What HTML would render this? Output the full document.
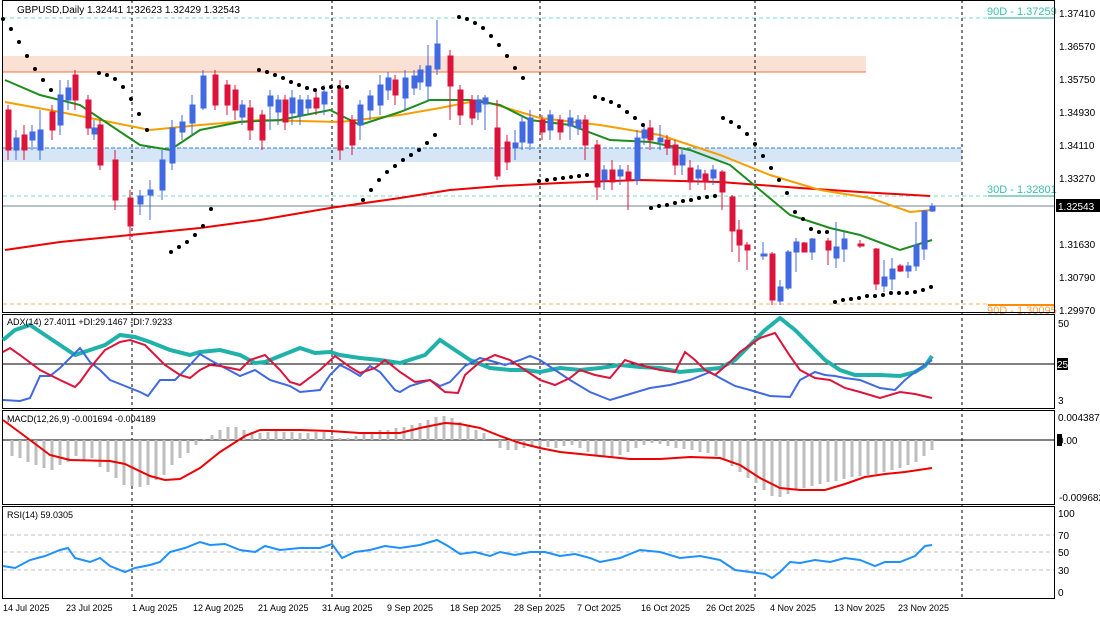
<!DOCTYPE html>
<html><head><meta charset="utf-8"><style>
html,body{margin:0;padding:0;background:#fff;}
svg{display:block;font-family:"Liberation Sans",sans-serif;}
</style></head><body>
<svg width="1100" height="619" viewBox="0 0 1100 619" xmlns="http://www.w3.org/2000/svg">
<rect width="1100" height="619" fill="#fff"/>
<rect x="3" y="56" width="863" height="16" fill="#fbe0d4"/>
<line x1="3" y1="72" x2="866" y2="72" stroke="#e8743b" stroke-width="1"/>
<rect x="3" y="148" width="959" height="14" fill="#d6e6f7"/>
<line x1="3" y1="148" x2="962" y2="148" stroke="#2f80d0" stroke-width="1" stroke-dasharray="4,2"/>
<line x1="3" y1="18" x2="988" y2="18" stroke="#7dd8c8" stroke-dasharray="4,3"/>
<line x1="988" y1="18" x2="1054" y2="18" stroke="#1fa889"/>
<line x1="3" y1="196" x2="988" y2="196" stroke="#7dd8c8" stroke-dasharray="4,3"/>
<line x1="988" y1="196" x2="1054" y2="196" stroke="#1fa889"/>
<line x1="3" y1="304" x2="988" y2="304" stroke="#ffb060" stroke-dasharray="4,3"/>
<line x1="988" y1="305" x2="1054" y2="305" stroke="#ff8c00" stroke-width="2"/>
<line x1="3" y1="206" x2="1054" y2="206" stroke="#708090"/>
<text x="987" y="15" font-size="11" fill="#3cbfa8">90D - 1.37259</text>
<text x="987" y="193" font-size="11" fill="#3cbfa8">30D - 1.32801</text>
<text x="987" y="314" font-size="11" fill="#ffa040">90D - 1.30095</text>
<g stroke="#000" stroke-dasharray="3,3" stroke-width="1">
<line x1="132" y1="0" x2="132" y2="600"/><line x1="332" y1="0" x2="332" y2="600"/>
<line x1="540" y1="0" x2="540" y2="600"/><line x1="755" y1="0" x2="755" y2="600"/>
<line x1="962" y1="0" x2="962" y2="600"/>
</g>
<polyline fill="none" stroke="#e00" stroke-width="2" points="5,250 60,242 130,235 200,228 260,220 330,208 400,198 450,190 500,186 560,183 640,180 720,182 760,185 800,188 860,192 930,196"/>
<polyline fill="none" stroke="#f5a000" stroke-width="2" points="5,102 60,112 100,120 150,130 200,125 260,120 340,122 400,115 440,108 480,100 540,118 600,125 660,135 720,155 770,175 820,190 870,198 910,212 932,210"/>
<polyline fill="none" stroke="#1e8c1e" stroke-width="2" points="5,80 40,95 80,105 110,125 140,145 170,150 200,130 240,122 280,120 330,110 360,125 400,112 430,100 470,100 500,105 530,120 570,125 610,140 650,142 690,150 730,165 760,190 790,215 830,228 860,235 900,250 932,240"/>
<g stroke-width="1">
<g fill="#dc143c" stroke="#dc143c">
<line x1="8" y1="105" x2="8" y2="160"/><rect x="6" y="110" width="5" height="40"/>
<line x1="24" y1="125" x2="24" y2="160"/><rect x="22" y="135" width="5" height="15"/>
<line x1="52" y1="105" x2="52" y2="140"/><rect x="50" y="112" width="5" height="18"/>
<line x1="75" y1="70" x2="75" y2="110"/><rect x="73" y="75" width="5" height="25"/>
<line x1="88" y1="95" x2="88" y2="135"/><rect x="86" y="100" width="5" height="28"/>
<line x1="100" y1="120" x2="100" y2="170"/><rect x="98" y="125" width="5" height="40"/>
<line x1="115" y1="150" x2="115" y2="210"/><rect x="113" y="160" width="5" height="40"/>
<line x1="130" y1="190" x2="130" y2="240"/><rect x="128" y="198" width="5" height="28"/>
<line x1="215" y1="70" x2="215" y2="110"/><rect x="213" y="75" width="5" height="30"/>
<line x1="227" y1="80" x2="227" y2="115"/><rect x="225" y="85" width="5" height="20"/>
<line x1="235" y1="85" x2="235" y2="120"/><rect x="233" y="90" width="5" height="20"/>
<line x1="250" y1="100" x2="250" y2="140"/><rect x="248" y="108" width="5" height="22"/>
<line x1="262" y1="110" x2="262" y2="150"/><rect x="260" y="115" width="5" height="25"/>
<line x1="285" y1="95" x2="285" y2="130"/><rect x="283" y="100" width="5" height="22"/>
<line x1="316" y1="90" x2="316" y2="115"/><rect x="314" y="98" width="5" height="10"/>
<line x1="340" y1="80" x2="340" y2="160"/><rect x="338" y="88" width="5" height="62"/>
<line x1="352" y1="115" x2="352" y2="155"/><rect x="350" y="120" width="5" height="25"/>
<line x1="395" y1="75" x2="395" y2="105"/><rect x="393" y="80" width="5" height="15"/>
<line x1="450" y1="50" x2="450" y2="120"/><rect x="448" y="56" width="5" height="30"/>
<line x1="460" y1="85" x2="460" y2="125"/><rect x="458" y="90" width="5" height="25"/>
<line x1="472" y1="95" x2="472" y2="125"/><rect x="470" y="100" width="5" height="18"/>
<line x1="497" y1="100" x2="497" y2="180"/><rect x="495" y="128" width="5" height="48"/>
<line x1="507" y1="135" x2="507" y2="170"/><rect x="505" y="142" width="5" height="20"/>
<line x1="542" y1="115" x2="542" y2="140"/><rect x="540" y="120" width="5" height="12"/>
<line x1="560" y1="115" x2="560" y2="140"/><rect x="558" y="120" width="5" height="12"/>
<line x1="585" y1="115" x2="585" y2="160"/><rect x="583" y="120" width="5" height="25"/>
<line x1="597" y1="140" x2="597" y2="200"/><rect x="595" y="145" width="5" height="42"/>
<line x1="612" y1="160" x2="612" y2="190"/><rect x="610" y="170" width="5" height="12"/>
<line x1="628" y1="165" x2="628" y2="210"/><rect x="626" y="172" width="5" height="8"/>
<line x1="650" y1="120" x2="650" y2="150"/><rect x="648" y="128" width="5" height="12"/>
<line x1="667" y1="135" x2="667" y2="155"/><rect x="665" y="140" width="5" height="8"/>
<line x1="675" y1="140" x2="675" y2="175"/><rect x="673" y="145" width="5" height="20"/>
<line x1="690" y1="160" x2="690" y2="190"/><rect x="688" y="168" width="5" height="14"/>
<line x1="705" y1="170" x2="705" y2="190"/><rect x="703" y="174" width="5" height="8"/>
<line x1="722" y1="170" x2="722" y2="210"/><rect x="720" y="172" width="5" height="20"/>
<line x1="732" y1="195" x2="732" y2="252"/><rect x="730" y="197" width="5" height="34"/>
<line x1="739" y1="220" x2="739" y2="262"/><rect x="737" y="230" width="5" height="15"/>
<line x1="747" y1="242" x2="747" y2="270"/><rect x="745" y="245" width="5" height="5"/>
<line x1="772" y1="252" x2="772" y2="305"/><rect x="770" y="254" width="5" height="46"/>
<line x1="804" y1="242" x2="804" y2="252"/><rect x="802" y="243" width="5" height="9"/>
<line x1="828" y1="238" x2="828" y2="265"/><rect x="826" y="241" width="5" height="9"/>
<line x1="860" y1="240" x2="860" y2="248"/><rect x="858" y="244" width="6" height="2"/>
<line x1="876" y1="248" x2="876" y2="290"/><rect x="874" y="249" width="5" height="35"/>
<line x1="900" y1="264" x2="900" y2="272"/><rect x="898" y="266" width="5" height="5"/>
</g>
<g fill="#4169e1" stroke="#4169e1">
<line x1="16" y1="130" x2="16" y2="160"/><rect x="14" y="138" width="5" height="12"/>
<line x1="32" y1="125" x2="32" y2="150"/><rect x="30" y="132" width="5" height="8"/>
<line x1="40" y1="110" x2="40" y2="160"/><rect x="38" y="130" width="5" height="20"/>
<line x1="60" y1="80" x2="60" y2="135"/><rect x="58" y="95" width="5" height="30"/>
<line x1="68" y1="80" x2="68" y2="110"/><rect x="66" y="88" width="5" height="12"/>
<line x1="94" y1="120" x2="94" y2="140"/><rect x="92" y="128" width="5" height="6"/>
<line x1="140" y1="190" x2="140" y2="215"/><rect x="138" y="196" width="5" height="8"/>
<line x1="150" y1="180" x2="150" y2="220"/><rect x="148" y="190" width="5" height="5"/>
<line x1="162" y1="150" x2="162" y2="200"/><rect x="160" y="160" width="5" height="30"/>
<line x1="172" y1="120" x2="172" y2="170"/><rect x="170" y="128" width="5" height="35"/>
<line x1="182" y1="115" x2="182" y2="140"/><rect x="180" y="122" width="5" height="10"/>
<line x1="192" y1="95" x2="192" y2="135"/><rect x="190" y="105" width="5" height="18"/>
<line x1="203" y1="70" x2="203" y2="110"/><rect x="201" y="76" width="5" height="32"/>
<line x1="242" y1="100" x2="242" y2="125"/><rect x="240" y="105" width="5" height="12"/>
<line x1="270" y1="90" x2="270" y2="130"/><rect x="268" y="96" width="5" height="10"/>
<line x1="278" y1="95" x2="278" y2="125"/><rect x="276" y="100" width="5" height="12"/>
<line x1="292" y1="90" x2="292" y2="125"/><rect x="290" y="98" width="5" height="15"/>
<line x1="300" y1="95" x2="300" y2="125"/><rect x="298" y="100" width="5" height="15"/>
<line x1="308" y1="95" x2="308" y2="115"/><rect x="306" y="100" width="5" height="8"/>
<line x1="324" y1="85" x2="324" y2="115"/><rect x="322" y="92" width="5" height="12"/>
<line x1="360" y1="100" x2="360" y2="140"/><rect x="358" y="105" width="5" height="20"/>
<line x1="370" y1="90" x2="370" y2="120"/><rect x="368" y="96" width="5" height="14"/>
<line x1="380" y1="75" x2="380" y2="115"/><rect x="378" y="85" width="5" height="20"/>
<line x1="388" y1="72" x2="388" y2="100"/><rect x="386" y="78" width="5" height="12"/>
<line x1="405" y1="70" x2="405" y2="110"/><rect x="403" y="78" width="5" height="20"/>
<line x1="414" y1="70" x2="414" y2="95"/><rect x="412" y="76" width="5" height="12"/>
<line x1="420" y1="65" x2="420" y2="90"/><rect x="418" y="70" width="5" height="12"/>
<line x1="428" y1="45" x2="428" y2="100"/><rect x="426" y="66" width="5" height="20"/>
<line x1="437" y1="20" x2="437" y2="75"/><rect x="435" y="44" width="5" height="25"/>
<line x1="478" y1="95" x2="478" y2="120"/><rect x="476" y="100" width="5" height="12"/>
<line x1="485" y1="95" x2="485" y2="130"/><rect x="483" y="98" width="5" height="6"/>
<line x1="515" y1="130" x2="515" y2="160"/><rect x="513" y="143" width="5" height="5"/>
<line x1="522" y1="115" x2="522" y2="150"/><rect x="520" y="122" width="5" height="20"/>
<line x1="530" y1="110" x2="530" y2="150"/><rect x="528" y="118" width="5" height="25"/>
<line x1="550" y1="110" x2="550" y2="140"/><rect x="548" y="115" width="5" height="15"/>
<line x1="570" y1="110" x2="570" y2="140"/><rect x="568" y="118" width="5" height="8"/>
<line x1="578" y1="115" x2="578" y2="135"/><rect x="576" y="120" width="5" height="8"/>
<line x1="604" y1="165" x2="604" y2="190"/><rect x="602" y="170" width="5" height="10"/>
<line x1="620" y1="165" x2="620" y2="185"/><rect x="618" y="170" width="5" height="6"/>
<line x1="637" y1="130" x2="637" y2="185"/><rect x="635" y="138" width="5" height="42"/>
<line x1="644" y1="125" x2="644" y2="145"/><rect x="642" y="130" width="5" height="8"/>
<line x1="660" y1="125" x2="660" y2="150"/><rect x="658" y="138" width="5" height="4"/>
<line x1="682" y1="150" x2="682" y2="175"/><rect x="680" y="155" width="5" height="10"/>
<line x1="698" y1="165" x2="698" y2="185"/><rect x="696" y="170" width="5" height="8"/>
<line x1="713" y1="165" x2="713" y2="185"/><rect x="711" y="170" width="5" height="8"/>
<line x1="763" y1="242" x2="763" y2="260"/><rect x="761" y="254" width="6" height="2"/>
<line x1="780" y1="280" x2="780" y2="305"/><rect x="778" y="287" width="5" height="14"/>
<line x1="788" y1="250" x2="788" y2="290"/><rect x="786" y="252" width="5" height="36"/>
<line x1="796" y1="238" x2="796" y2="272"/><rect x="794" y="242" width="5" height="10"/>
<line x1="812" y1="238" x2="812" y2="260"/><rect x="810" y="239" width="5" height="13"/>
<line x1="836" y1="222" x2="836" y2="268"/><rect x="834" y="247" width="5" height="11"/>
<line x1="844" y1="232" x2="844" y2="262"/><rect x="842" y="239" width="5" height="10"/>
<line x1="884" y1="260" x2="884" y2="292"/><rect x="882" y="277" width="5" height="9"/>
<line x1="892" y1="258" x2="892" y2="290"/><rect x="890" y="269" width="5" height="10"/>
<line x1="908" y1="262" x2="908" y2="278"/><rect x="906" y="266" width="5" height="5"/>
<line x1="916" y1="222" x2="916" y2="271"/><rect x="914" y="245" width="5" height="21"/>
<line x1="924" y1="210" x2="924" y2="260"/><rect x="922" y="211" width="5" height="38"/>
<line x1="932" y1="203" x2="932" y2="212"/><rect x="930" y="206" width="5" height="5"/>
</g>
</g>
<g fill="#000">
<circle cx="3" cy="19" r="2"/><circle cx="11" cy="29" r="2"/><circle cx="19" cy="42" r="2"/><circle cx="27" cy="56" r="2"/><circle cx="35" cy="69" r="2"/><circle cx="43" cy="80" r="2"/><circle cx="51" cy="90" r="2"/>
<circle cx="99" cy="73" r="2"/><circle cx="107" cy="75" r="2"/><circle cx="115" cy="79" r="2"/><circle cx="123" cy="87" r="2"/><circle cx="131" cy="99" r="2"/><circle cx="139" cy="114" r="2"/><circle cx="147" cy="130" r="2"/>
<circle cx="171" cy="252" r="2"/><circle cx="179" cy="247" r="2"/><circle cx="187" cy="242" r="2"/><circle cx="195" cy="235" r="2"/><circle cx="203" cy="226" r="2"/><circle cx="211" cy="209" r="2"/>
<circle cx="259" cy="70" r="2"/><circle cx="267" cy="72" r="2"/><circle cx="275" cy="75" r="2"/><circle cx="283" cy="78" r="2"/><circle cx="291" cy="82" r="2"/><circle cx="299" cy="85" r="2"/><circle cx="307" cy="88" r="2"/><circle cx="315" cy="90" r="2"/><circle cx="323" cy="88" r="2"/><circle cx="331" cy="87" r="2"/><circle cx="339" cy="87" r="2"/><circle cx="347" cy="87" r="2"/>
<circle cx="363" cy="200" r="2"/><circle cx="371" cy="190" r="2"/><circle cx="379" cy="180" r="2"/><circle cx="387" cy="172" r="2"/><circle cx="395" cy="166" r="2"/><circle cx="403" cy="160" r="2"/><circle cx="411" cy="155" r="2"/><circle cx="419" cy="150" r="2"/><circle cx="427" cy="143" r="2"/><circle cx="435" cy="135" r="2"/>
<circle cx="459" cy="17" r="2"/><circle cx="467" cy="19" r="2"/><circle cx="475" cy="23" r="2"/><circle cx="483" cy="28" r="2"/><circle cx="491" cy="36" r="2"/><circle cx="499" cy="45" r="2"/><circle cx="507" cy="56" r="2"/><circle cx="515" cy="68" r="2"/><circle cx="523" cy="78" r="2"/>
<circle cx="539" cy="181" r="2"/><circle cx="547" cy="180" r="2"/><circle cx="555" cy="179" r="2"/><circle cx="563" cy="178" r="2"/><circle cx="571" cy="177" r="2"/><circle cx="579" cy="176" r="2"/><circle cx="587" cy="175" r="2"/>
<circle cx="595" cy="97" r="2"/><circle cx="603" cy="99" r="2"/><circle cx="611" cy="102" r="2"/><circle cx="619" cy="106" r="2"/><circle cx="627" cy="112" r="2"/><circle cx="635" cy="118" r="2"/><circle cx="643" cy="125" r="2"/>
<circle cx="651" cy="208" r="2"/><circle cx="659" cy="206" r="2"/><circle cx="667" cy="205" r="2"/><circle cx="675" cy="203" r="2"/><circle cx="683" cy="201" r="2"/><circle cx="691" cy="200" r="2"/><circle cx="699" cy="198" r="2"/><circle cx="707" cy="197" r="2"/><circle cx="715" cy="196" r="2"/>
<circle cx="723" cy="118" r="2"/><circle cx="731" cy="122" r="2"/><circle cx="739" cy="127" r="2"/><circle cx="747" cy="134" r="2"/><circle cx="755" cy="144" r="2"/><circle cx="763" cy="156" r="2"/><circle cx="771" cy="168" r="2"/><circle cx="779" cy="180" r="2"/><circle cx="787" cy="193" r="2"/><circle cx="795" cy="212" r="2"/><circle cx="803" cy="219" r="2"/><circle cx="811" cy="229" r="2"/><circle cx="819" cy="232" r="2"/><circle cx="827" cy="232" r="2"/>
<circle cx="835" cy="302" r="2"/><circle cx="843" cy="300" r="2"/><circle cx="851" cy="299" r="2"/><circle cx="859" cy="298" r="2"/><circle cx="867" cy="296" r="2"/><circle cx="875" cy="296" r="2"/><circle cx="883" cy="295" r="2"/><circle cx="891" cy="293" r="2"/><circle cx="899" cy="293" r="2"/><circle cx="907" cy="293" r="2"/><circle cx="915" cy="292" r="2"/><circle cx="923" cy="290" r="2"/><circle cx="931" cy="287" r="2"/>
</g>
<text x="17" y="13" font-size="10" fill="#000">GBPUSD,Daily  1.32441 1.32623 1.32429 1.32543</text>
<g fill="none" stroke="#000" stroke-width="1">
<rect x="2.5" y="0.5" width="1052" height="312"/>
<rect x="2.5" y="314.5" width="1052" height="94"/>
<rect x="2.5" y="410.5" width="1052" height="94"/>
<rect x="2.5" y="506.5" width="1052" height="92"/>
</g>
<g font-size="10" fill="#000">
<text x="1059" y="17">1.37410</text><text x="1059" y="50">1.36570</text><text x="1059" y="83">1.35750</text><text x="1059" y="116">1.34930</text><text x="1059" y="149">1.34110</text><text x="1059" y="182">1.33270</text><text x="1059" y="248">1.31630</text><text x="1059" y="281">1.30790</text><text x="1059" y="314">1.29970</text>
</g>
<rect x="1056" y="199" width="44" height="13" fill="#000"/>
<text x="1058" y="210" font-size="10" fill="#fff">1.32543</text>
<line x1="3" y1="364" x2="1054" y2="364" stroke="#000"/>
<polyline fill="none" stroke="#20b2aa" stroke-width="4" points="3,340 15,330 30,325 45,335 60,345 75,355 90,350 105,345 120,335 135,337 150,342 170,350 190,355 200,352 220,350 240,355 255,363 265,362 280,356 300,348 315,353 330,352 340,355 360,358 380,360 400,363 425,355 440,340 455,350 470,360 490,368 510,370 525,370 540,372 560,368 580,370 600,368 620,365 640,367 660,368 680,372 700,370 720,368 735,360 750,345 765,330 780,318 795,330 810,345 825,360 840,370 855,375 880,375 900,376 915,372 925,366 932,356"/>
<polyline fill="none" stroke="#4169e1" stroke-width="2" points="3,400 20,401 30,398 40,376 50,376 60,368 70,358 80,348 90,362 100,370 110,380 125,386 140,392 148,396 160,380 175,380 190,365 200,354 210,360 225,368 240,376 255,370 270,380 290,386 300,392 320,390 330,375 340,365 350,370 360,376 370,366 380,372 395,390 400,392 410,386 430,380 440,386 450,382 465,366 480,358 495,362 505,365 520,360 530,356 540,360 555,370 570,380 590,392 610,400 630,394 650,388 670,385 690,380 710,372 720,378 735,386 750,390 770,396 790,397 800,380 815,372 825,375 835,376 845,378 860,380 880,388 895,390 905,380 915,372 932,360"/>
<polyline fill="none" stroke="#dc143c" stroke-width="2" points="3,352 10,348 20,355 40,370 60,380 75,387 80,382 90,368 105,350 120,342 130,340 145,345 165,365 180,375 190,378 200,370 210,365 220,366 240,370 250,360 265,355 280,370 290,382 300,385 320,370 335,356 350,367 360,373 375,368 385,360 400,372 415,382 430,380 445,392 458,393 465,375 480,362 495,355 510,360 525,370 540,380 555,385 570,378 580,370 595,375 610,378 625,360 640,365 660,370 675,372 685,352 695,360 705,370 715,375 730,362 740,352 760,338 775,333 790,356 800,370 815,378 830,380 845,388 860,392 880,398 900,392 915,394 932,398"/>
<text x="7" y="325" font-size="9" fill="#000">ADX(14) 27.4011 +DI:29.1467 -DI:7.9233</text>
<g font-size="10" fill="#000"><text x="1058" y="327">50</text><text x="1058" y="404">3</text></g>
<rect x="1057" y="358" width="11" height="12" fill="#000"/><text x="1057" y="368" font-size="10" fill="#fff">25</text>
<line x1="3" y1="440" x2="1054" y2="440" stroke="#000"/>
<g stroke="#bdbdbd" stroke-width="3">
<line x1="12" y1="440" x2="12" y2="456"/><line x1="20" y1="440" x2="20" y2="458"/><line x1="28" y1="440" x2="28" y2="462"/><line x1="36" y1="440" x2="36" y2="465"/><line x1="44" y1="440" x2="44" y2="468"/><line x1="52" y1="440" x2="52" y2="470"/><line x1="60" y1="440" x2="60" y2="465"/><line x1="68" y1="440" x2="68" y2="462"/><line x1="76" y1="440" x2="76" y2="456"/><line x1="84" y1="440" x2="84" y2="460"/><line x1="92" y1="440" x2="92" y2="458"/><line x1="100" y1="440" x2="100" y2="467"/><line x1="108" y1="440" x2="108" y2="472"/><line x1="116" y1="440" x2="116" y2="478"/><line x1="124" y1="440" x2="124" y2="485"/><line x1="132" y1="440" x2="132" y2="486"/><line x1="140" y1="440" x2="140" y2="487"/><line x1="148" y1="440" x2="148" y2="485"/><line x1="156" y1="440" x2="156" y2="480"/><line x1="164" y1="440" x2="164" y2="475"/><line x1="172" y1="440" x2="172" y2="465"/><line x1="180" y1="440" x2="180" y2="458"/><line x1="188" y1="440" x2="188" y2="453"/><line x1="196" y1="440" x2="196" y2="445"/><line x1="204" y1="440" x2="204" y2="439"/><line x1="212" y1="440" x2="212" y2="435"/><line x1="220" y1="440" x2="220" y2="430"/><line x1="228" y1="440" x2="228" y2="427"/><line x1="236" y1="440" x2="236" y2="427"/><line x1="244" y1="440" x2="244" y2="430"/><line x1="252" y1="440" x2="252" y2="432"/><line x1="260" y1="440" x2="260" y2="433"/><line x1="268" y1="440" x2="268" y2="432"/><line x1="276" y1="440" x2="276" y2="430"/><line x1="284" y1="440" x2="284" y2="432"/><line x1="292" y1="440" x2="292" y2="432"/><line x1="300" y1="440" x2="300" y2="433"/><line x1="308" y1="440" x2="308" y2="433"/><line x1="316" y1="440" x2="316" y2="432"/><line x1="324" y1="440" x2="324" y2="432"/><line x1="332" y1="440" x2="332" y2="436"/><line x1="340" y1="440" x2="340" y2="438"/><line x1="348" y1="440" x2="348" y2="438"/><line x1="356" y1="440" x2="356" y2="436"/><line x1="364" y1="440" x2="364" y2="434"/><line x1="372" y1="440" x2="372" y2="432"/><line x1="380" y1="440" x2="380" y2="430"/><line x1="388" y1="440" x2="388" y2="430"/><line x1="396" y1="440" x2="396" y2="428"/><line x1="404" y1="440" x2="404" y2="427"/><line x1="412" y1="440" x2="412" y2="425"/><line x1="420" y1="440" x2="420" y2="423"/><line x1="428" y1="440" x2="428" y2="420"/><line x1="436" y1="440" x2="436" y2="417"/><line x1="444" y1="440" x2="444" y2="416"/><line x1="452" y1="440" x2="452" y2="418"/><line x1="460" y1="440" x2="460" y2="422"/><line x1="468" y1="440" x2="468" y2="425"/><line x1="476" y1="440" x2="476" y2="430"/><line x1="484" y1="440" x2="484" y2="433"/><line x1="500" y1="440" x2="500" y2="448"/><line x1="508" y1="440" x2="508" y2="450"/><line x1="516" y1="440" x2="516" y2="450"/><line x1="524" y1="440" x2="524" y2="448"/><line x1="532" y1="440" x2="532" y2="447"/><line x1="540" y1="440" x2="540" y2="446"/><line x1="548" y1="440" x2="548" y2="447"/><line x1="556" y1="440" x2="556" y2="448"/><line x1="564" y1="440" x2="564" y2="446"/><line x1="572" y1="440" x2="572" y2="445"/><line x1="580" y1="440" x2="580" y2="448"/><line x1="588" y1="440" x2="588" y2="452"/><line x1="596" y1="440" x2="596" y2="455"/><line x1="604" y1="440" x2="604" y2="456"/><line x1="612" y1="440" x2="612" y2="457"/><line x1="620" y1="440" x2="620" y2="455"/><line x1="628" y1="440" x2="628" y2="452"/><line x1="636" y1="440" x2="636" y2="448"/><line x1="644" y1="440" x2="644" y2="445"/><line x1="652" y1="440" x2="652" y2="443"/><line x1="660" y1="440" x2="660" y2="444"/><line x1="668" y1="440" x2="668" y2="446"/><line x1="676" y1="440" x2="676" y2="448"/><line x1="684" y1="440" x2="684" y2="449"/><line x1="692" y1="440" x2="692" y2="450"/><line x1="700" y1="440" x2="700" y2="452"/><line x1="708" y1="440" x2="708" y2="453"/><line x1="716" y1="440" x2="716" y2="456"/><line x1="724" y1="440" x2="724" y2="460"/><line x1="732" y1="440" x2="732" y2="466"/><line x1="740" y1="440" x2="740" y2="472"/><line x1="748" y1="440" x2="748" y2="478"/><line x1="756" y1="440" x2="756" y2="483"/><line x1="764" y1="440" x2="764" y2="490"/><line x1="772" y1="440" x2="772" y2="496"/><line x1="780" y1="440" x2="780" y2="497"/><line x1="788" y1="440" x2="788" y2="494"/><line x1="796" y1="440" x2="796" y2="490"/><line x1="804" y1="440" x2="804" y2="488"/><line x1="812" y1="440" x2="812" y2="486"/><line x1="820" y1="440" x2="820" y2="484"/><line x1="828" y1="440" x2="828" y2="482"/><line x1="836" y1="440" x2="836" y2="481"/><line x1="844" y1="440" x2="844" y2="479"/><line x1="852" y1="440" x2="852" y2="477"/><line x1="860" y1="440" x2="860" y2="476"/><line x1="868" y1="440" x2="868" y2="475"/><line x1="876" y1="440" x2="876" y2="474"/><line x1="884" y1="440" x2="884" y2="472"/><line x1="892" y1="440" x2="892" y2="470"/><line x1="900" y1="440" x2="900" y2="468"/><line x1="908" y1="440" x2="908" y2="465"/><line x1="916" y1="440" x2="916" y2="462"/><line x1="924" y1="440" x2="924" y2="456"/><line x1="932" y1="440" x2="932" y2="450"/>
</g>
<polyline fill="none" stroke="#e00" stroke-width="2" points="3,420 30,440 50,455 70,460 110,461 125,464 150,476 165,480 180,479 200,468 220,452 245,436 260,430 300,430 330,431 360,433 400,433 420,428 445,423 460,424 480,428 500,436 520,443 540,448 560,452 590,455 610,457 630,459 660,459 690,457 720,458 740,465 760,478 780,488 800,490 825,490 845,484 865,477 885,474 905,472 932,468"/>
<text x="7" y="422" font-size="9" fill="#000">MACD(12,26,9) -0.001694 -0.004189</text>
<g font-size="10" fill="#000"><text x="1058" y="421">0.004387</text><text x="1059" y="501">-0.009682</text></g>
<rect x="1057" y="434" width="5" height="12" fill="#000"/><text x="1058" y="444" font-size="10" fill="#000">0.00</text>
<g stroke="#c0c0c0" stroke-dasharray="4,3"><line x1="3" y1="535" x2="1054" y2="535"/><line x1="3" y1="552" x2="1054" y2="552"/><line x1="3" y1="570" x2="1054" y2="570"/></g>
<polyline fill="none" stroke="#1e90ff" stroke-width="2" points="3,566 15,568 30,560 45,556 60,550 68,548 75,558 90,562 100,558 110,566 125,572 135,568 150,565 160,562 170,552 185,548 200,542 210,545 225,544 240,550 255,552 265,546 280,550 300,548 320,548 332,544 342,558 355,552 370,550 385,546 400,548 420,545 437,540 448,546 460,554 475,552 490,556 500,552 515,555 530,552 545,552 560,556 575,554 590,558 600,562 620,558 640,550 660,552 680,558 700,556 720,560 735,570 750,572 765,574 772,578 780,572 790,562 800,563 815,560 830,562 845,558 860,560 875,566 885,562 900,562 915,556 925,546 932,545"/>
<text x="7" y="518" font-size="9" fill="#000">RSI(14) 59.0305</text>
<g font-size="10" fill="#000"><text x="1058" y="517">100</text><text x="1058" y="539">70</text><text x="1058" y="556">50</text><text x="1058" y="574">30</text><text x="1058" y="596">0</text></g>
<g font-size="9" fill="#000">
<text x="3" y="611">14 Jul 2025</text><text x="66" y="611">23 Jul 2025</text><text x="132" y="611">1 Aug 2025</text><text x="193" y="611">12 Aug 2025</text><text x="258" y="611">21 Aug 2025</text><text x="322" y="611">31 Aug 2025</text><text x="387" y="611">9 Sep 2025</text><text x="450" y="611">18 Sep 2025</text><text x="514" y="611">28 Sep 2025</text><text x="577" y="611">7 Oct 2025</text><text x="641" y="611">16 Oct 2025</text><text x="706" y="611">26 Oct 2025</text><text x="770" y="611">4 Nov 2025</text><text x="834" y="611">13 Nov 2025</text><text x="898" y="611">23 Nov 2025</text>
</g>
</svg>
</body></html>
